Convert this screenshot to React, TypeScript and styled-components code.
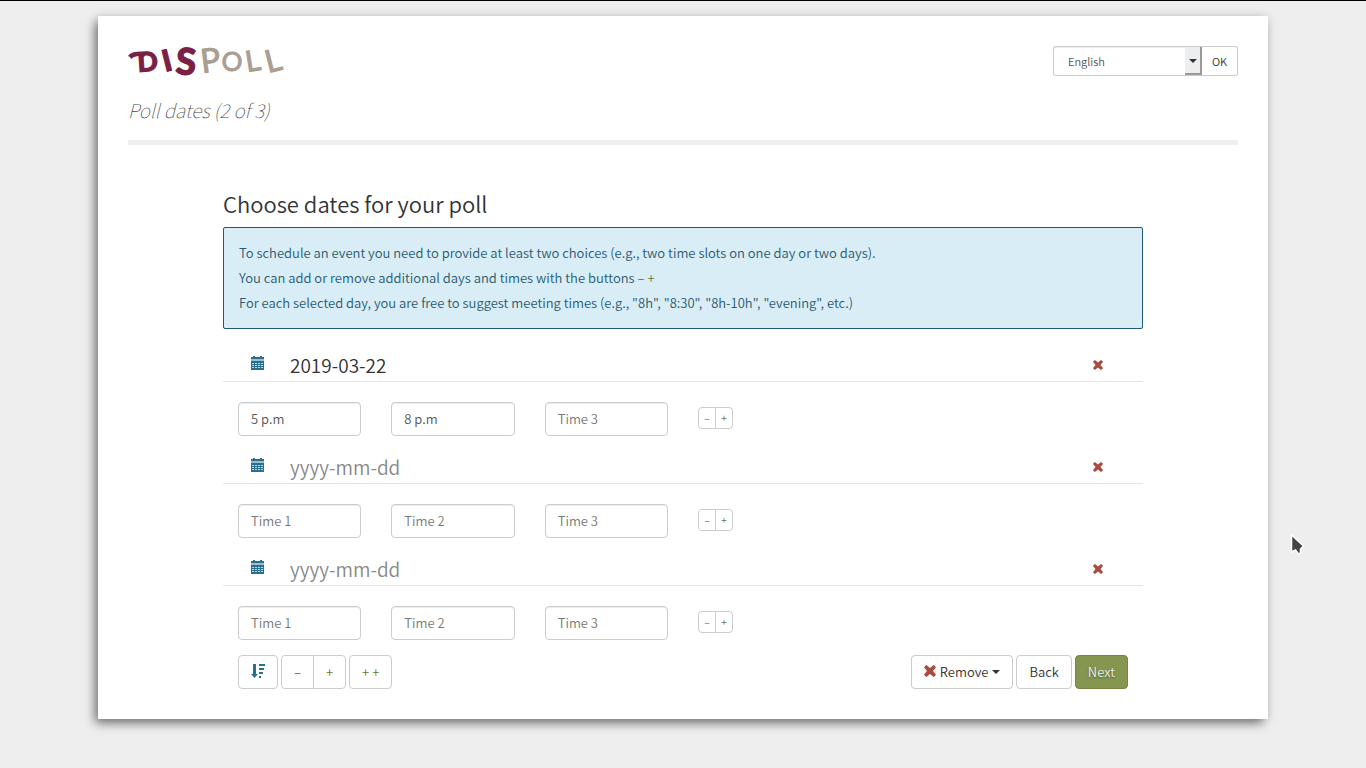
import React from 'react';
import styled, { createGlobalStyle } from 'styled-components';

const GlobalStyle = createGlobalStyle`
  *, *::before, *::after { box-sizing: border-box; }
  body {
    margin: 0;
    border-top: 1px solid #000;
    background: #eee;
    color: #333;
    font-family: "Noto Sans CJK SC", "Noto Sans", sans-serif;
    font-size: 13px;
    font-weight: 350;
    line-height: 20px;
  }
  button, input, select { font: inherit; color: inherit; }
`;

const Card = styled.main`
  max-width: 1170px;
  margin: 15px auto 48px;
  padding: 30px;
  background: #fff;
  box-shadow: 0 0 10px rgba(0, 0, 0, 0.1), -4px 5px 10px -1px #777;
`;

const Header = styled.header`
  border-bottom: 5px solid #eee;
  padding-bottom: 15px;
`;

const Brand = styled.div`
  display: flex;
  justify-content: space-between;
  align-items: flex-start;
`;

const LogoLink = styled.a`
  display: block;
  height: 40px;
  svg { display: block; overflow: visible; }
`;

const LogoText = styled.text<{ $tone: string; $weight: number }>`
  font-family: Lato, sans-serif;
  font-weight: ${(p) => p.$weight};
  fill: ${(p) => p.$tone};
  stroke: ${(p) => p.$tone};
`;

const LanguageForm = styled.form`
  display: flex;
  width: 185px;
  height: 30px;
  font-size: 11px;
`;

const SelectBox = styled.div`
  display: flex;
  flex: 1;
  border: 1px solid #ccc;
  border-right: 0;
  border-radius: 3px 0 0 3px;
  box-shadow: inset 0 1px 1px rgba(0, 0, 0, 0.075);
`;

const LanguageSelect = styled.select`
  flex: 1;
  min-width: 0;
  padding: 0 14px;
  border: 0;
  background: transparent;
  appearance: none;
  color: #555;
`;

const SelectArrow = styled.span`
  display: flex;
  justify-content: center;
  width: 17px;
  padding-top: 12px;
  background: #eceef0;
  border-right: 2px solid #999;
  border-bottom: 2px solid #999;
`;

const Caret = styled.span`
  display: inline-block;
  width: 0;
  height: 0;
  border: 4px solid transparent;
  border-top-color: currentColor;
  border-bottom: 0;
  vertical-align: middle;
`;

const OkButton = styled.button`
  width: 36px;
  padding: 0;
  border: 1px solid #ccc;
  border-left: 0;
  border-radius: 0 3px 3px 0;
  background: #fff;
`;

const Step = styled.h2`
  margin: 9px 0 0;
  color: #444;
  font-size: 19px;
  font-style: italic;
  font-weight: 100;
  line-height: 30px;
`;

const Content = styled.form`
  max-width: 920px;
  margin: 0 auto;
  padding-top: 44px;
`;

const Title = styled.h3`
  margin: 0;
  font-size: 22px;
  font-weight: 350;
  line-height: 28px;
`;

const Notice = styled.div`
  margin: 10px 0;
  padding: 12px 15px 13px;
  border: 1px solid #1f5a75;
  border-radius: 2px;
  background: #d9edf7;
  color: #285a6e;
  p { margin: 0; line-height: 25px; }
`;

const Day = styled.fieldset`
  min-width: 0;
  margin: 0;
  padding: 0;
  border: 0;
`;

const DateRow = styled.div`
  display: flex;
  align-items: center;
  height: 43px;
  padding: 8px 40px 0 28px;
  border-bottom: 1px solid #e5e5e5;
  > svg { margin-bottom: 2px; }
`;

const DateInput = styled.input`
  flex: 1;
  min-width: 0;
  height: 34px;
  margin-left: 14px;
  padding: 0 12px;
  border: 0;
  background: transparent;
  font-size: 19px;
  &::placeholder { color: #888; opacity: 1; }
`;

const IconButton = styled.button`
  display: flex;
  padding: 2px 0 0;
  border: 0;
  background: transparent;
`;

const TimeRow = styled.div`
  display: grid;
  grid-template-columns: repeat(6, 1fr);
  padding: 20px 0 5px;
`;

const TimeCell = styled.div`
  padding: 0 15px;
`;

const TimeInput = styled.input`
  display: block;
  width: 100%;
  height: 34px;
  padding: 0 12px 2px;
  border: 1px solid #ccc;
  border-radius: 4px;
  background: #fff;
  box-shadow: inset 0 1px 1px rgba(0, 0, 0, 0.075);
  color: #555;
  &::placeholder { color: #777; opacity: 1; }
`;

const ButtonGroup = styled.div`
  display: flex;
  button:first-child { border-radius: 4px 0 0 4px; }
  button:last-child { border-radius: 0 4px 4px 0; margin-left: -1px; }
`;

const Sign = styled.span<{ $plus?: boolean }>`
  color: ${(p) => (p.$plus ? '#677835' : '#2a6f8e')};
`;

const SmallButton = styled.button`
  width: 18px;
  height: 22px;
  margin-top: 5px;
  padding: 0;
  border: 1px solid #ccc;
  background: #fff;
  font-size: 10px;
  line-height: 20px;
`;

const Toolbar = styled.div`
  display: flex;
  justify-content: space-between;
  padding: 10px 15px 0;
`;

const ToolGroup = styled.div`
  display: flex;
  gap: 3px;
`;

const Button = styled.button<{ $primary?: boolean }>`
  display: flex;
  align-items: center;
  gap: 4px;
  height: 34px;
  padding: 0 12px;
  border: 1px solid ${(p) => (p.$primary ? '#768640' : '#ccc')};
  border-radius: 4px;
  background: ${(p) => (p.$primary ? '#849650' : '#fff')};
  color: ${(p) => (p.$primary ? '#eee' : '#333')};
  text-shadow: ${(p) => (p.$primary ? '0 1px 2px rgba(0, 0, 0, 0.4)' : 'none')};
  > svg { margin-bottom: 3px; }
`;

const Pointer = styled.svg`
  position: absolute;
  left: 1289px;
  top: 533px;
  pointer-events: none;
`;

const CalendarIcon = () => (
  <svg width="13" height="14" viewBox="0 0 13 14" aria-hidden="true">
    <path fill="#2a6f8e" d="M2 0h2v1h5V0h2v1h2v2H0V1h2z" />
    <path fill="#9dbdcb" d="M0 3h13v2H0z" />
    <path fill="#2a6f8e" d="M0 5h13v9H0z" />
    <path stroke="#c0d6df" strokeDasharray="2 1" d="M1 7.5h11M1 9.5h11M1 11.5h11" />
  </svg>
);

const CrossIcon = ({ size }: { size: number }) => (
  <svg width={size} height={size} viewBox="0 0 12 12" aria-hidden="true">
    <path
      fill="#aa4b40"
      d="M2.7.3 6 3 9.3.3q.4-.4.8 0l1.6 1.6q.4.4 0 .8L9 6l2.7 3.3q.4.4 0 .8l-1.6 1.6q-.4.4-.8 0L6 9l-3.300 2.700q-.4.4-.8 0L.3 10.100q-.4-.4 0-.8L3 6 .3 2.700q-.4-.4 0-.8L1.900.3q.4-.4.8 0z"
    />
  </svg>
);

const SortIcon = () => (
  <svg width="14" height="14" viewBox="0 0 14 14" aria-hidden="true">
    <path fill="#2a6f8e" d="M2 0h3v10h2L3.500 14 0 10h2zM8 0h6v2H8zM8 4h5v2H8zM8 8h4v2H8zM8 12h2v2H8z" />
  </svg>
);

const Logo = () => (
  <svg width="157" height="30" viewBox="0 0 157 30" role="img" aria-label="Dispoll">
    <path fill="#7a1f45" d="M0 10Q4 5 12 6l7 0-3 5-6-1-4 1-3 2-1-2z" />
    <LogoText $tone="#7a1f45" $weight={900}>
      <tspan x="10" y="26" fontSize="27" rotate="-4">D</tspan>
    </LogoText>
    <LogoText $tone="#7a1f45" $weight={900}>
      <tspan x="37" y="26" fontSize="30" rotate="-14">I</tspan>
    </LogoText>
    <LogoText $tone="#7a1f45" $weight={900}>
      <tspan x="47" y="28" fontSize="37" rotate="4">S</tspan>
    </LogoText>
    <LogoText $tone="#aa9d92" $weight={400}>
      <tspan x="74" y="27" fontSize="33" rotate="-7">P</tspan>
    </LogoText>
    <LogoText $tone="#aa9d92" $weight={400}>
      <tspan x="93" y="24" fontSize="26" rotate="4">O</tspan>
      <tspan x="119" y="26" fontSize="29" rotate="-9">L</tspan>
    </LogoText>
    <LogoText $tone="#aa9d92" $weight={400}>
      <tspan x="140" y="27" fontSize="31" rotate="-14">L</tspan>
    </LogoText>
  </svg>
);

const days = [
  { date: '2019-03-22', times: ['5 p.m', '8 p.m', ''] },
  { date: '', times: ['', '', ''] },
  { date: '', times: ['', '', ''] },
];

export default function App() {
  return (
    <>
      <GlobalStyle />
      <Card>
        <Header>
          <Brand>
            <LogoLink href="#"><Logo /></LogoLink>
            <LanguageForm>
              <SelectBox>
                <LanguageSelect aria-label="Language">
                  <option>English</option>
                </LanguageSelect>
                <SelectArrow><Caret /></SelectArrow>
              </SelectBox>
              <OkButton type="button">OK</OkButton>
            </LanguageForm>
          </Brand>
          <Step>Poll dates (2 of 3)</Step>
        </Header>
        <Content>
          <Title>Choose dates for your poll</Title>
          <Notice>
            <p>To schedule an event you need to provide at least two choices (e.g., two time slots on one day or two days).</p>
            <p>You can add or remove additional days and times with the buttons <Sign>–</Sign> <Sign $plus>+</Sign></p>
            <p>For each selected day, you are free to suggest meeting times (e.g., "8h", "8:30", "8h-10h", "evening", etc.)</p>
          </Notice>
          {days.map((day, i) => (
            <Day key={i}>
              <DateRow>
                <CalendarIcon />
                <DateInput aria-label={`Day ${i + 1}`} placeholder="yyyy-mm-dd" defaultValue={day.date} />
                <IconButton type="button" aria-label="Remove this day"><CrossIcon size={10} /></IconButton>
              </DateRow>
              <TimeRow>
                {day.times.map((time, j) => (
                  <TimeCell key={j}>
                    <TimeInput aria-label={`Time ${j + 1}`} placeholder={`Time ${j + 1}`} defaultValue={time} />
                  </TimeCell>
                ))}
                <TimeCell>
                  <ButtonGroup>
                    <SmallButton type="button"><Sign>–</Sign></SmallButton>
                    <SmallButton type="button"><Sign $plus>+</Sign></SmallButton>
                  </ButtonGroup>
                </TimeCell>
              </TimeRow>
            </Day>
          ))}
          <Toolbar>
            <ToolGroup>
              <Button type="button" aria-label="Sort the dates"><SortIcon /></Button>
              <ButtonGroup>
                <Button type="button"><Sign>–</Sign></Button>
                <Button type="button"><Sign $plus>+</Sign></Button>
              </ButtonGroup>
              <Button type="button"><Sign $plus>+ +</Sign></Button>
            </ToolGroup>
            <ToolGroup>
              <Button type="button"><CrossIcon size={12} />Remove<Caret /></Button>
              <Button type="button">Back</Button>
              <Button type="button" $primary>Next</Button>
            </ToolGroup>
          </Toolbar>
        </Content>
      </Card>
      <Pointer width="17" height="23" viewBox="0 0 17 23" aria-hidden="true">
        <path d="M2.500 2v17l4-2 3 4 2-1v-4l3-3z" fill="#444" stroke="#fff" strokeWidth="1.500" />
      </Pointer>
    </>
  );
}
